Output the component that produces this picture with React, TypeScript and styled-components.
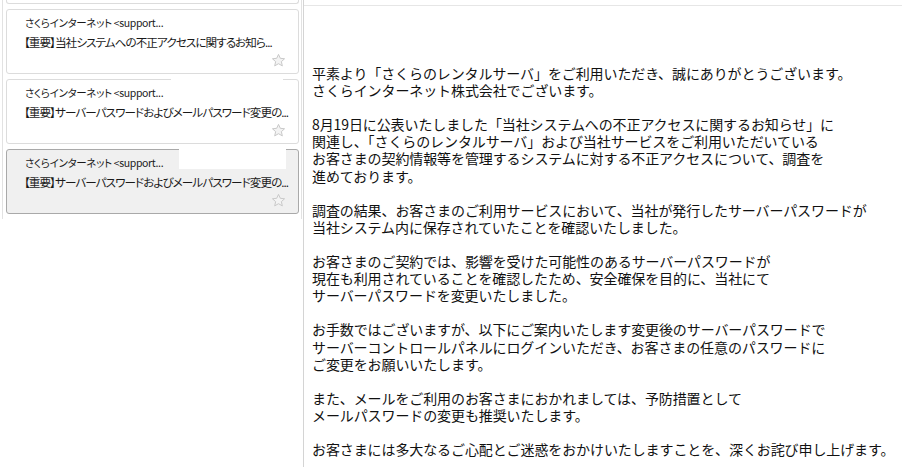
import styled, { createGlobalStyle } from "styled-components";

type Mail = {
  id: number;
  sender: string;
  subject: string;
  selected?: boolean;
  mask?: { left: number; width: number; height: number };
};

const mails: Mail[] = [
  {
    id: 1,
    sender: "さくらインターネット <support...",
    subject: "【重要】当社システムへの不正アクセスに関するお知ら...",
  },
  {
    id: 2,
    sender: "さくらインターネット <support...",
    subject: "【重要】サーバーパスワードおよびメールパスワード変更の...",
    mask: { left: 164, width: 112, height: 18 },
  },
  {
    id: 3,
    sender: "さくらインターネット <support...",
    subject: "【重要】サーバーパスワードおよびメールパスワード変更の...",
    selected: true,
    mask: { left: 172, width: 107, height: 21 },
  },
];

const body = [
  [
    "平素より「さくらのレンタルサーバ」をご利用いただき、誠にありがとうございます。",
    "さくらインターネット株式会社でございます。",
  ],
  [
    "8月19日に公表いたしました「当社システムへの不正アクセスに関するお知らせ」に",
    "関連し、「さくらのレンタルサーバ」および当社サービスをご利用いただいている",
    "お客さまの契約情報等を管理するシステムに対する不正アクセスについて、調査を",
    "進めております。",
  ],
  [
    "調査の結果、お客さまのご利用サービスにおいて、当社が発行したサーバーパスワードが",
    "当社システム内に保存されていたことを確認いたしました。",
  ],
  [
    "お客さまのご契約では、影響を受けた可能性のあるサーバーパスワードが",
    "現在も利用されていることを確認したため、安全確保を目的に、当社にて",
    "サーバーパスワードを変更いたしました。",
  ],
  [
    "お手数ではございますが、以下にご案内いたします変更後のサーバーパスワードで",
    "サーバーコントロールパネルにログインいただき、お客さまの任意のパスワードに",
    "ご変更をお願いいたします。",
  ],
  [
    "また、メールをご利用のお客さまにおかれましては、予防措置として",
    "メールパスワードの変更も推奨いたします。",
  ],
  ["お客さまには多大なるご心配とご迷惑をおかけいたしますことを、深くお詫び申し上げます。"],
];

function Star() {
  return (
    <svg width="15" height="15" viewBox="0 0 24 24">
      <path
        d="M12 2.2l2.9 6.3 6.8.7-5.1 4.6 1.5 6.8L12 17.1l-6.1 3.5 1.5-6.8-5.1-4.6 6.8-.7z"
        fill="#f3f3f3"
        stroke="#c9c9c9"
        strokeWidth="1.6"
        strokeLinejoin="round"
      />
    </svg>
  );
}

export default function App() {
  return (
    <>
      <GlobalStyle />
      <Page>
        <ListPane>
          <List>
            <CardTail />
            {mails.map((m) => (
              <Card key={m.id} $selected={!!m.selected}>
                {m.mask && (
                  <Mask
                    style={{
                      left: m.mask.left,
                      width: m.mask.width,
                      height: m.mask.height,
                    }}
                  />
                )}
                <Sender>{m.sender}</Sender>
                <Subject>{m.subject}</Subject>
                <CardFoot>
                  <Star />
                </CardFoot>
              </Card>
            ))}
            <CardHead />
          </List>
        </ListPane>
        <Reader>
          <ReaderHead />
          <Message>
            {body.map((para, i) => (
              <Para key={i}>
                {para.map((line, j) => (
                  <Line key={j}>{line}</Line>
                ))}
              </Para>
            ))}
          </Message>
        </Reader>
      </Page>
    </>
  );
}

const GlobalStyle = createGlobalStyle`
  html, body {
    margin: 0;
    padding: 0;
    background: #fff;
  }
  body {
    font-family: "Noto Sans CJK JP", "Noto Sans", sans-serif;
    color: #111;
  }
`;

const Page = styled.div`
  display: flex;
  width: 902px;
  height: 467px;
  overflow: hidden;
`;

const ListPane = styled.div`
  width: 301px;
  padding-left: 2px;
  border-right: 1px solid #d4d4d4;
  flex-shrink: 0;
`;

const List = styled.div`
  box-sizing: border-box;
  width: 300px;
  height: 219px;
  padding: 0 2px 0 3px;
  border-left: 1px solid #e2e2e2;
  border-right: 1px solid #e2e2e2;
  display: flex;
  flex-direction: column;
  gap: 5px;
  overflow: hidden;
`;

const CardTail = styled.div`
  height: 3px;
  flex-shrink: 0;
  border: 1px solid #dcdcdc;
  border-top: none;
  border-radius: 0 0 3px 3px;
`;

const CardHead = styled.div`
  height: 4px;
  flex-shrink: 0;
  border: 1px solid #dcdcdc;
  border-bottom: none;
  border-radius: 3px 3px 0 0;
`;

const Card = styled.div<{ $selected: boolean }>`
  position: relative;
  box-sizing: border-box;
  height: 65px;
  flex-shrink: 0;
  padding: 6px 0 0 18px;
  display: flex;
  flex-direction: column;
  border: 1px solid ${(p) => (p.$selected ? "#a9a9a9" : "#dcdcdc")};
  border-radius: 3px;
  background: ${(p) => (p.$selected ? "#f0f0f0" : "#fff")};
`;

const Mask = styled.div`
  position: absolute;
  top: -2px;
  background: #fff;
`;

const Sender = styled.div`
  font-size: 10.5px;
  line-height: 14px;
  color: #1a1a1a;
  white-space: nowrap;
  font-feature-settings: "palt";
  letter-spacing: -0.35px;
`;

const Subject = styled.div`
  margin-top: 5px;
  margin-left: -1px;
  font-size: 11.6px;
  line-height: 14px;
  color: #1a1a1a;
  white-space: nowrap;
  font-feature-settings: "palt";
  letter-spacing: -0.95px;
`;

const CardFoot = styled.div`
  display: flex;
  justify-content: flex-end;
  padding-right: 12px;
  margin-top: 4px;
`;

const Reader = styled.div`
  flex: 1;
  display: flex;
  flex-direction: column;
`;

const ReaderHead = styled.div`
  height: 5px;
  border-bottom: 1px solid #e6e6e6;
`;

const Message = styled.div`
  padding: 59px 0 0 8px;
  font-size: 14px;
  line-height: 17.1px;
  color: #111;
  display: flex;
  flex-direction: column;
  gap: 17.1px;
`;

const Para = styled.div`
  display: flex;
  flex-direction: column;
`;

const Line = styled.div`
  white-space: nowrap;
  letter-spacing: -0.1px;
`;
